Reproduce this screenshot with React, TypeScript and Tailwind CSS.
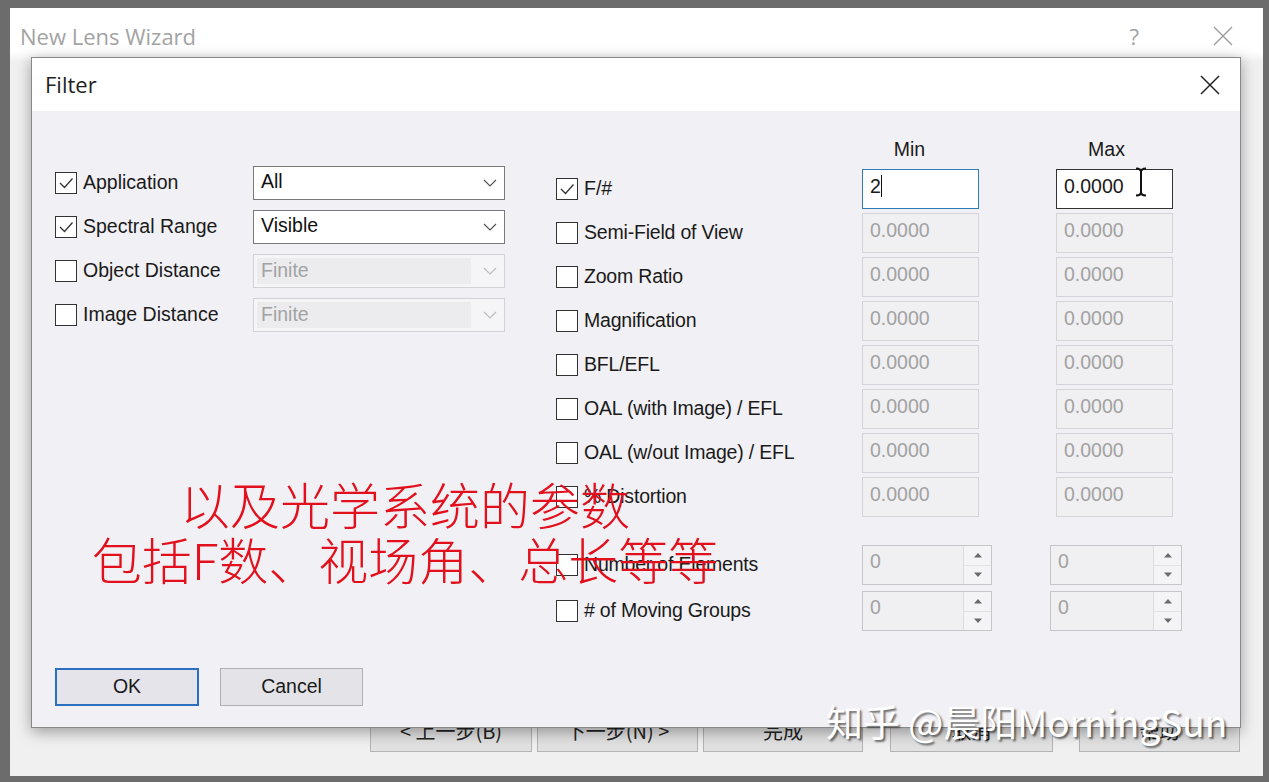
import React from 'react';

const ui = { fontFamily: '"Liberation Sans", Arial, sans-serif' };
const title = { fontFamily: '"Open Sans", "Noto Sans", sans-serif' };
const cjk = { fontFamily: '"Noto Sans CJK SC", "Noto Sans", sans-serif' };

const Check = ({ checked }: { checked?: boolean }) => (
  <span className="w-[22px] h-[22px] border border-[#333] bg-white flex items-center justify-center shrink-0">
    {checked && (
      <svg width="16" height="14" viewBox="0 0 16 14">
        <path d="M2 7 L6.5 11.5 L14.5 2.5" fill="none" stroke="#333" strokeWidth="1.3" />
      </svg>
    )}
  </span>
);

const Chevron = ({ color }: { color: string }) => (
  <svg width="14" height="8" viewBox="0 0 14 8">
    <path d="M1 1 L7 7 L13 1" fill="none" stroke={color} strokeWidth="1.2" />
  </svg>
);

const Dropdown = ({ value, enabled }: { value: string; enabled: boolean }) =>
  enabled ? (
    <div className="w-[252px] h-[34px] border border-[#7a7a7a] bg-white flex items-center justify-between pl-[7px] pr-[7px] text-[#111]">
      <span className="-mt-[3px]">{value}</span>
      <Chevron color="#555" />
    </div>
  ) : (
    <div className="w-[252px] h-[34px] border border-[#d2d2d6] bg-[#f5f5f7] flex items-center justify-between p-[3px] pr-[7px] text-[#a2a2a2]">
      <span className="h-full w-[214px] bg-[#ececef] pl-[4px] leading-[24px]">{value}</span>
      <Chevron color="#bdbdbd" />
    </div>
  );

const SpinArrow = ({ up }: { up?: boolean }) => (
  <svg width="10" height="6" viewBox="0 0 10 6">
    <path d={up ? 'M1 5.5 L5 1 L9 5.5 Z' : 'M1 0.5 L5 5 L9 0.5 Z'} fill="#6a6a6a" />
  </svg>
);

const Spinner = ({ w }: { w: string }) => (
  <div className={`${w} h-[40px] border border-[#c6c6ca] bg-[#f0f0f3] flex`}>
    <span className="flex-1 pl-[7px] pt-[4px] leading-[22px] text-[#a2a2a2]">0</span>
    <div className="w-[28px] flex flex-col border-l border-[#dcdce0]">
      <div className="flex-1 flex items-center justify-center bg-[#f4f4f6] border-b border-[#e2e2e6]">
        <SpinArrow up />
      </div>
      <div className="flex-1 flex items-center justify-center bg-[#f4f4f6]">
        <SpinArrow />
      </div>
    </div>
  </div>
);

const DisabledBox = () => (
  <div className="w-[117px] h-[40px] border border-[#d4d4d8] bg-[#f0f0f3] pl-[7px] pt-[5px] leading-[22px] text-[#a2a2a2]">
    0.0000
  </div>
);

const leftRows = [
  { label: 'Application', checked: true, value: 'All', enabled: true },
  { label: 'Spectral Range', checked: true, value: 'Visible', enabled: true },
  { label: 'Object Distance', checked: false, value: 'Finite', enabled: false },
  { label: 'Image Distance', checked: false, value: 'Finite', enabled: false },
];

const rightRows = [
  'Semi-Field of View',
  'Zoom Ratio',
  'Magnification',
  'BFL/EFL',
  'OAL (with Image) / EFL',
  'OAL (w/out Image) / EFL',
  '% Distortion',
];

const wizardButtons = [
  { label: '< 上一步(B)', w: 'w-[162px]', ml: '' },
  { label: '下一步(N) >', w: 'w-[161px]', ml: 'ml-[5px]' },
  { label: '完成', w: 'w-[160px]', ml: 'ml-[5px]' },
  { label: '取消', w: 'w-[163px]', ml: 'ml-[27px]' },
  { label: '帮助', w: 'w-[161px]', ml: 'ml-[26px]' },
];

export default function App() {
  return (
    <div className="relative w-[1269px] h-[782px] overflow-hidden bg-[#6c6c6c] pt-[8px] pl-[10px]">
      {/* wizard window behind */}
      <div className="w-[1253px] h-[768px] bg-[#f0f0f0] flex flex-col">
        <div className="h-[54px] bg-gradient-to-b from-white from-80% to-[#f0f0f0] flex items-center pl-[10px] pr-[30px]" style={title}>
          <span className="text-[22px] text-[#a3a3a3] mt-[3px]">New Lens Wizard</span>
          <span className="ml-auto text-[22px] text-[#a3a3a3] mr-[74px] mt-[3px]">?</span>
          <svg className="mt-[2px]" width="20" height="20" viewBox="0 0 20 20">
            <path d="M1 1 L19 19 M19 1 L1 19" stroke="#9a9a9a" strokeWidth="1.3" />
          </svg>
        </div>
        <div className="flex-1 flex items-end justify-end pr-[23px] pb-[24px]">
          {wizardButtons.map((b) => (
            <div
              key={b.label}
              className={`${b.w} ${b.ml} h-[42px] border border-[#b4b4b4] bg-[#e1e1e1] flex items-center justify-center text-[20px] text-[#222]`}
              style={cjk}
            >
              {b.label}
            </div>
          ))}
        </div>
      </div>

      {/* Filter dialog */}
      <div className="absolute left-[31px] top-[57px] w-[1210px] h-[671px] border border-[#888] bg-[#f1f0f4] flex flex-col shadow-[0_4px_14px_rgba(0,0,0,0.35)]">
        <div className="h-[53px] bg-white flex items-center pl-[13px] pr-[20px]" style={title}>
          <span className="text-[22px] text-[#1e1e1e]">Filter</span>
          <svg className="ml-auto" width="20" height="20" viewBox="0 0 20 20">
            <path d="M1 1 L19 19 M19 1 L1 19" stroke="#222" strokeWidth="1.5" />
          </svg>
        </div>

        <div className="flex-1 flex flex-col pt-[27px] pl-[23px] pb-[21px] text-[19.5px] text-[#1a1a1a]" style={ui}>
          <div className="flex">
            {/* left column */}
            <div className="w-[501px] pt-[28px] flex flex-col gap-[10px]">
              {leftRows.map((r) => (
                <div key={r.label} className="flex items-center h-[34px]">
                  <div className="w-[198px] flex items-center">
                    <Check checked={r.checked} />
                    <span className="ml-[6px]">{r.label}</span>
                  </div>
                  <Dropdown value={r.value} enabled={r.enabled} />
                </div>
              ))}
            </div>

            {/* right column */}
            <div className="flex flex-col">
              <div className="grid grid-cols-[306px_117px_77px_117px] h-[22px] mb-[9px] leading-[22px]">
                <span />
                <span className="text-center pr-[22px]">Min</span>
                <span />
                <span className="text-center pr-[16px]">Max</span>
              </div>

              <div className="flex flex-col gap-[4px]">
                <div className="grid grid-cols-[306px_117px_77px_117px] items-center">
                  <div className="flex items-center">
                    <Check checked />
                    <span className="ml-[6px]">F/#</span>
                  </div>
                  <div className="h-[40px] border border-[#2e7db8] bg-white pl-[7px] pt-[5px] leading-[22px] flex items-start">
                    <span>2</span>
                    <span className="w-[1px] h-[22px] bg-[#111]" />
                  </div>
                  <span />
                  <div className="h-[40px] border border-[#333] bg-white pl-[7px] pt-[5px] leading-[22px] flex items-start relative">
                    <span>0.0000</span>
                    <svg className="absolute left-[78px] -top-[3px]" width="12" height="30" viewBox="0 0 12 30">
                      <path d="M1 1.5 Q6 1.5 6 5 L6 25 Q6 28.5 1 28.5 M11 1.5 Q6 1.5 6 5 M6 25 Q6 28.5 11 28.5" fill="none" stroke="#111" strokeWidth="2" />
                    </svg>
                  </div>
                </div>

                {rightRows.map((label) => (
                  <div key={label} className="grid grid-cols-[306px_117px_77px_117px] items-center">
                    <div className="flex items-center">
                      <Check />
                      <span className="ml-[6px] tracking-[-0.2px]">{label}</span>
                    </div>
                    <DisabledBox />
                    <span />
                    <DisabledBox />
                  </div>
                ))}
              </div>

              <div className="flex flex-col gap-[6px] mt-[28px]">
                {['Number of Elements', '# of Moving Groups'].map((label) => (
                  <div key={label} className="grid grid-cols-[306px_130px_58px_132px] items-center">
                    <div className="flex items-center">
                      <Check />
                      <span className="ml-[6px] tracking-[-0.2px]">{label}</span>
                    </div>
                    <Spinner w="w-[130px]" />
                    <span />
                    <Spinner w="w-[132px]" />
                  </div>
                ))}
              </div>
            </div>
          </div>

          <div className="mt-auto flex gap-[21px]">
            <div className="w-[144px] h-[38px] border-2 border-[#2a6fc0] bg-[#e4e4ea] flex items-center justify-center">OK</div>
            <div className="w-[143px] h-[38px] border border-[#b0b0b4] bg-[#e4e4e8] flex items-center justify-center">Cancel</div>
          </div>
        </div>
      </div>

      {/* red caption overlay */}
      <div
        className="absolute left-[88px] top-[476px] w-[634px] text-center text-[50px] leading-[55px] font-light text-[#e2101c]"
        style={cjk}
      >
        <div>以及光学系统的参数</div>
        <div>包括F数、视场角、总长等等</div>
      </div>

      {/* watermark */}
      <div
        className="absolute left-[826px] top-[697px] text-[37px] leading-[48px] text-white [text-shadow:2px_2px_2px_rgba(0,0,0,0.55)]"
        style={cjk}
      >
        知乎 @晨阳MorningSun
      </div>
    </div>
  );
}
